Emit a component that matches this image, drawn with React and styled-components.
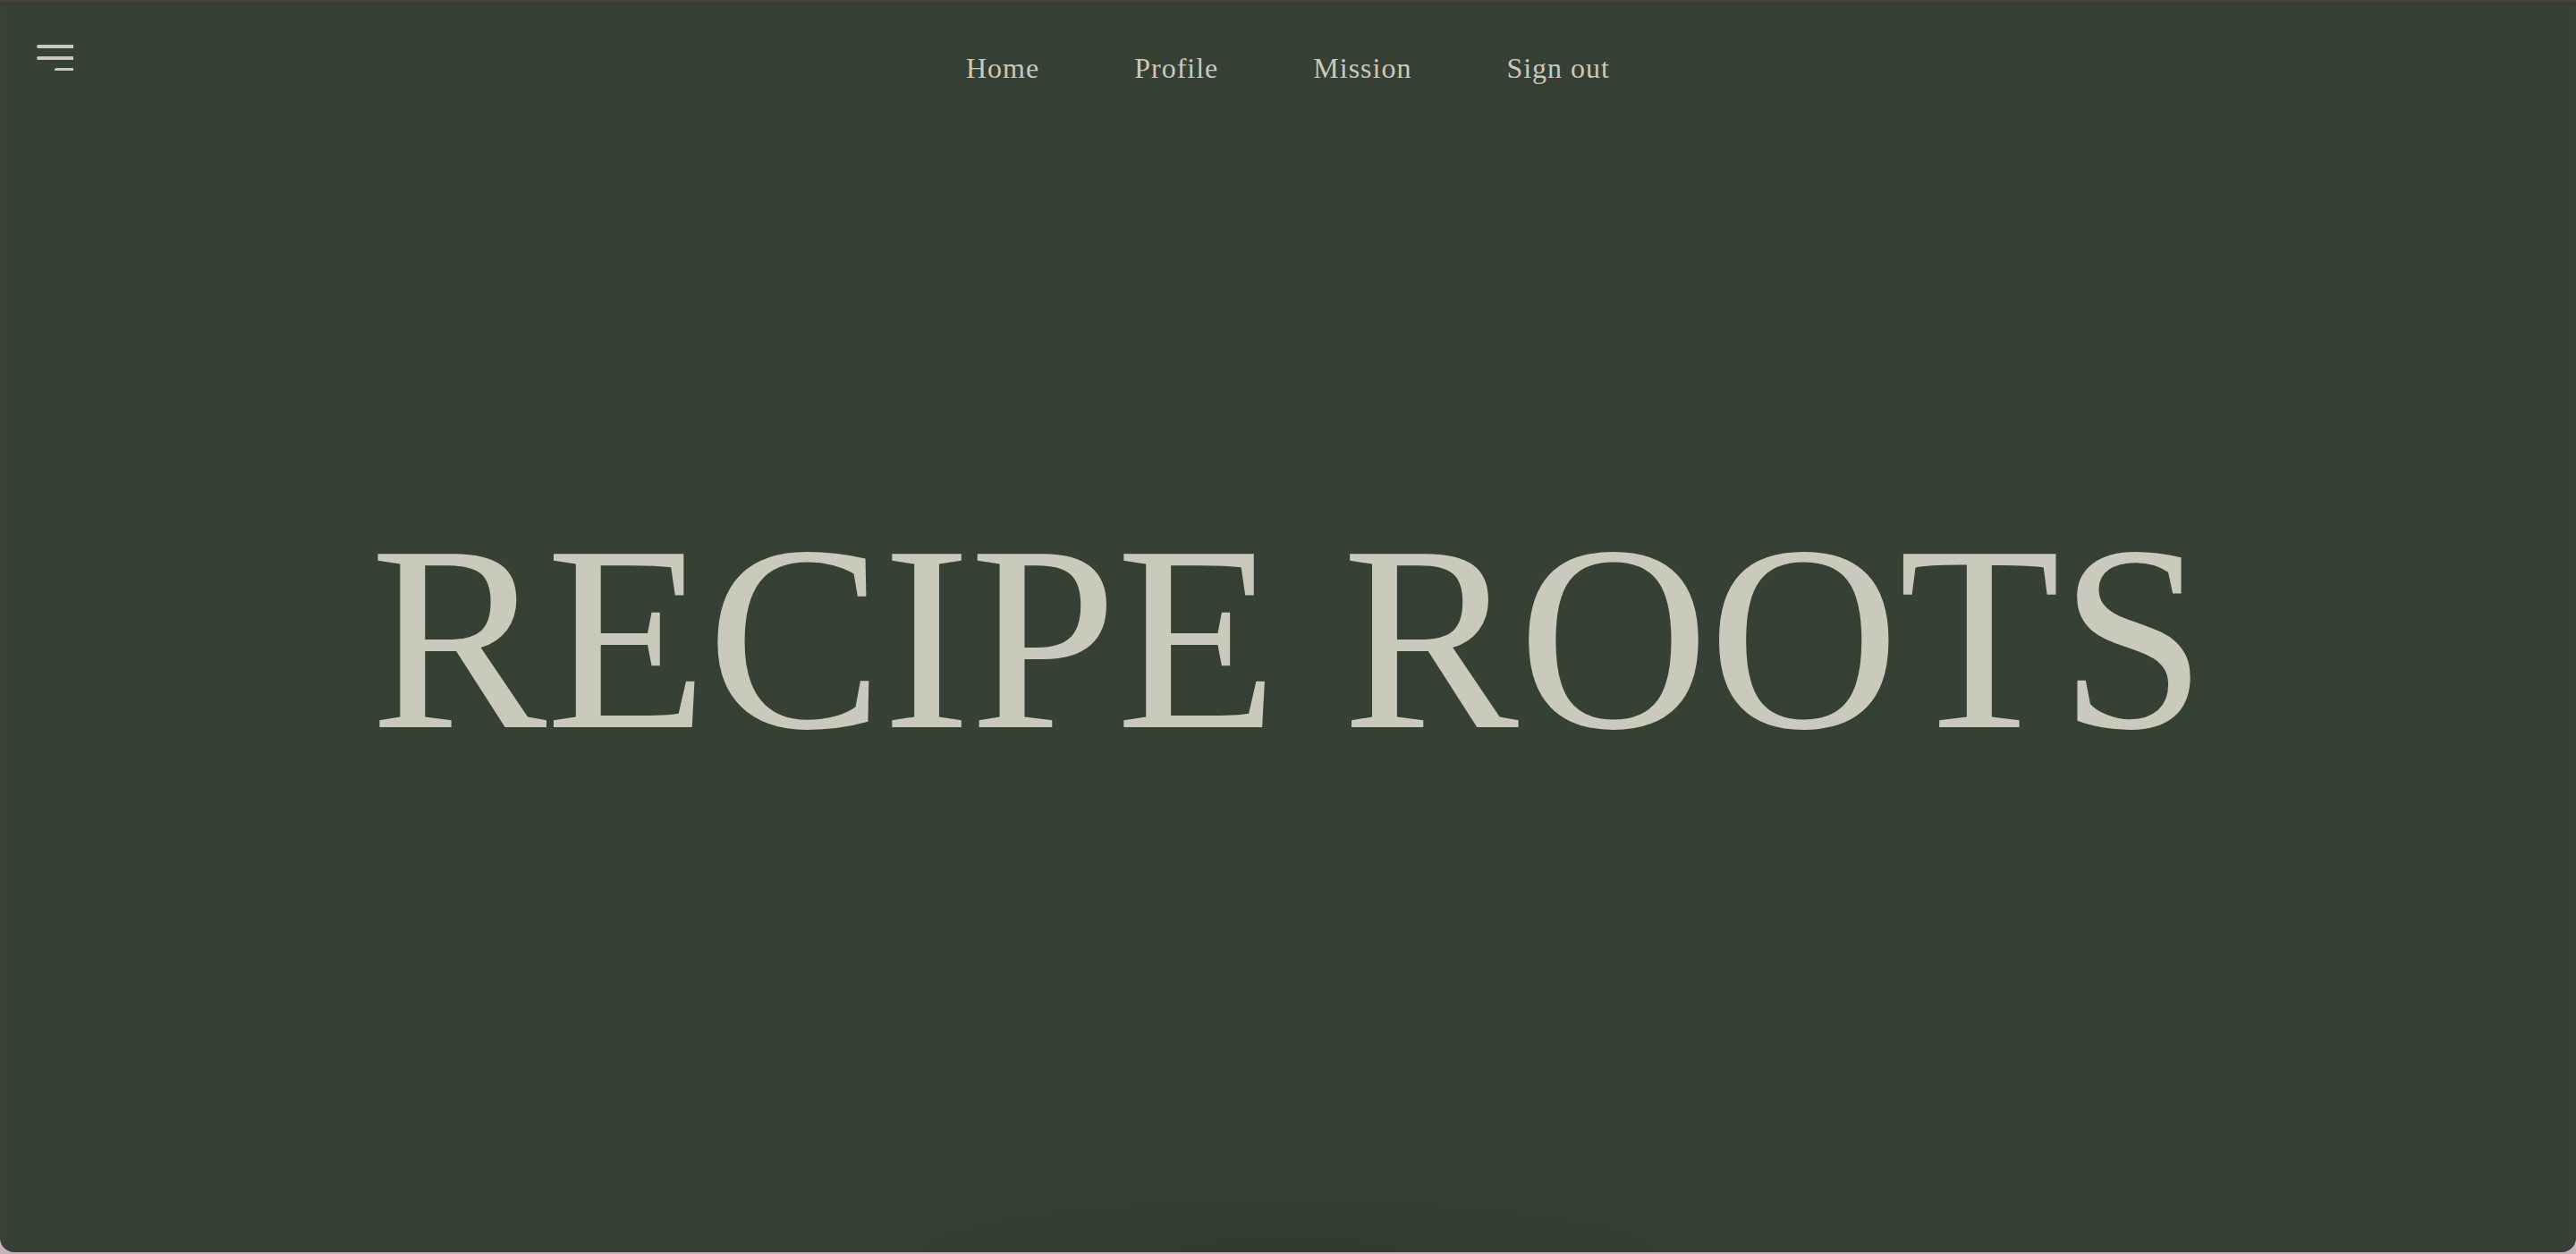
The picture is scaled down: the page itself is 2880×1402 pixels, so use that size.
import styled, { createGlobalStyle } from "styled-components";

const GlobalStyle = createGlobalStyle`
  html, body {
    margin: 0;
    padding: 0;
    background: #c8b3bb;
  }
  * {
    box-sizing: border-box;
  }
`;

const Page = styled.div`
  height: 1400px;
  display: flex;
  flex-direction: column;
  background-color: #364034;
  background-image: radial-gradient(
    ellipse 560px 80px at 50% 100%,
    rgba(30, 36, 28, 0.22),
    rgba(30, 36, 28, 0) 100%
  );
  border-top: 2px solid #4b403d;
  border-left: 1px solid #3e3f38;
  border-right: 1px solid #3e3f38;
  border-radius: 0 0 16px 16px;
  color: #c9c9bc;
  font-family: "Liberation Serif", "Times New Roman", serif;
`;

const Header = styled.header`
  height: 110px;
  display: grid;
  grid-template-columns: 1fr auto 1fr;
  align-items: start;
  padding: 45px 39px 0;
`;

const MenuButton = styled.button`
  all: unset;
  width: 42px;
  height: 32px;
  cursor: pointer;
  svg {
    display: block;
  }
`;

const Nav = styled.nav`
  display: flex;
  gap: 106px;
  margin-top: 13px;
`;

const NavLink = styled.a`
  font-size: 32px;
  line-height: 1;
  letter-spacing: 1px;
  color: #c9c9bc;
  text-decoration: none;
  cursor: pointer;
`;

const Hero = styled.main`
  flex: 1;
  display: flex;
  align-items: center;
  justify-content: center;
  padding-bottom: 87px;
`;

const Title = styled.h1`
  margin: 0;
  font-size: 296px;
  font-weight: 400;
  line-height: 1;
  letter-spacing: -1px;
  color: #c9c9bc;
  white-space: nowrap;
`;

const MenuIcon = () => (
  <svg width="42" height="32" viewBox="0 0 42 32" fill="none">
    <g stroke="#c9c9bc" strokeWidth="4" strokeLinecap="round">
      <line x1="3" y1="5" x2="41" y2="5" />
      <line x1="3" y1="18" x2="41" y2="18" />
      <line x1="23" y1="31" x2="41" y2="31" />
    </g>
  </svg>
);

const links = ["Home", "Profile", "Mission", "Sign out"];

export default function App() {
  return (
    <>
      <GlobalStyle />
      <Page>
        <Header>
          <MenuButton aria-label="Menu">
            <MenuIcon />
          </MenuButton>
          <Nav>
            {links.map((l) => (
              <NavLink key={l}>{l}</NavLink>
            ))}
          </Nav>
        </Header>
        <Hero>
          <Title>RECIPE ROOTS</Title>
        </Hero>
      </Page>
    </>
  );
}
